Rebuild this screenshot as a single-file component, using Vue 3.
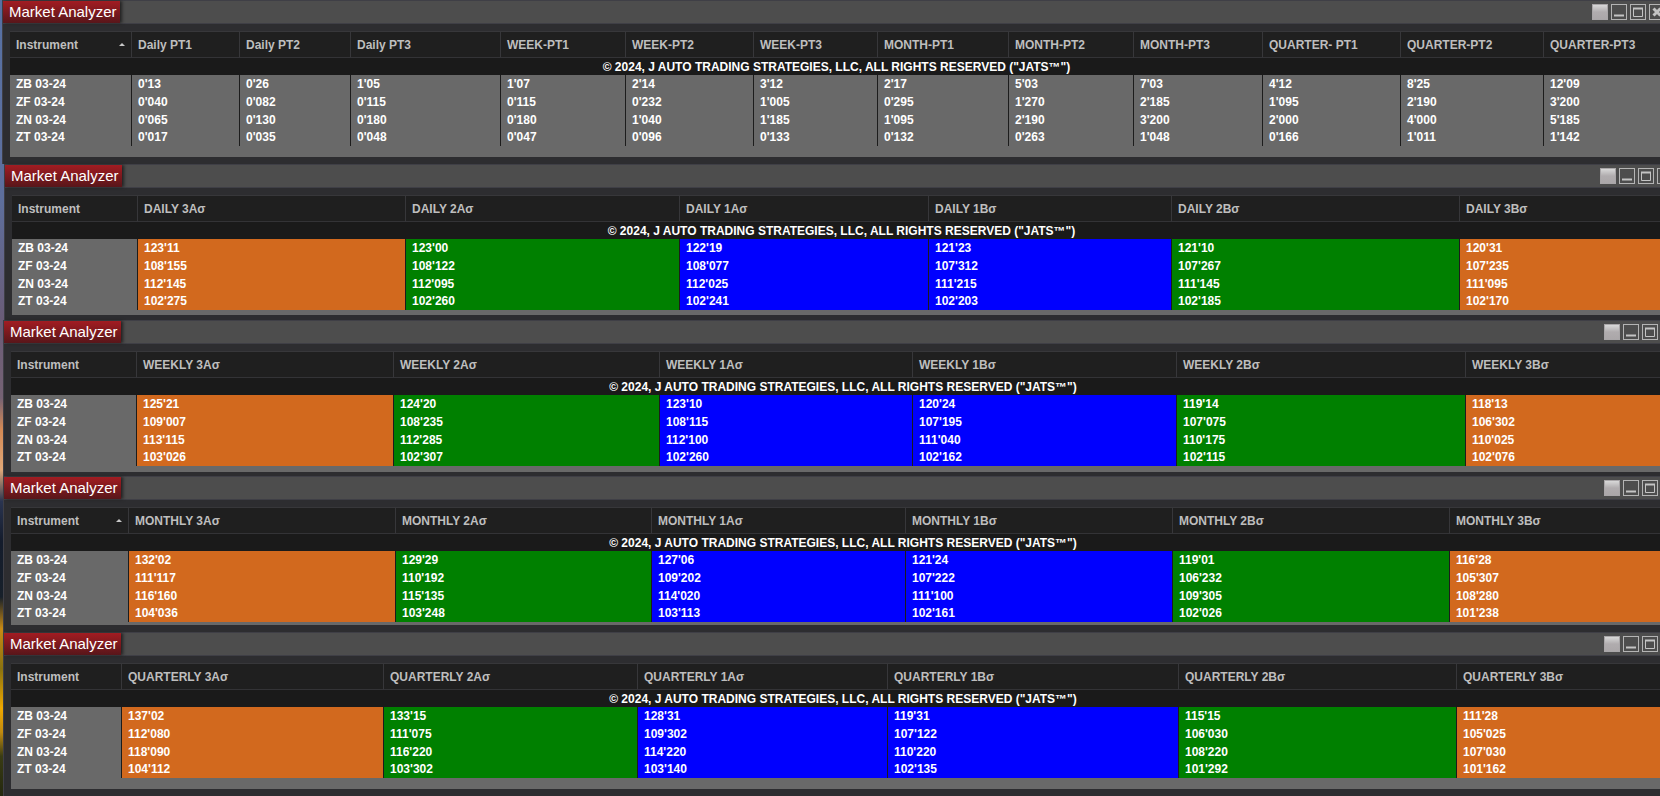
<script setup>
const notice = '© 2024, J AUTO TRADING STRATEGIES, LLC, ALL RIGHTS RESERVED ("JATS™")'
const symbols = ['ZB 03-24', 'ZF 03-24', 'ZN 03-24', 'ZT 03-24']
const bands = ['orange', 'green', 'blue', 'blue', 'green', 'orange']
const bandNames = ['3Aσ', '2Aσ', '1Aσ', '1Bσ', '2Bσ', '3Bσ']

const rows = (text) => text.trim().split('\n').map((line) => line.trim().split(/\s+/))

const panels = [
  {
    id: 'targets',
    sorted: true,
    weights: [122, 108, 111, 150, 125, 128, 124, 131, 125, 129, 138, 143, 119],
    heads: ['Daily PT1', 'Daily PT2', 'Daily PT3', 'WEEK-PT1', 'WEEK-PT2', 'WEEK-PT3', 'MONTH-PT1',
      'MONTH-PT2', 'MONTH-PT3', 'QUARTER- PT1', 'QUARTER-PT2', 'QUARTER-PT3'],
    tones: Array(12).fill('plain'),
    rows: rows(`
      0'13 0'26 1'05 1'07 2'14 3'12 2'17 5'03 7'03 4'12 8'25 12'09
      0'040 0'082 0'115 0'115 0'232 1'005 0'295 1'270 2'185 1'095 2'190 3'200
      0'065 0'130 0'180 0'180 1'040 1'185 1'095 2'190 3'200 2'000 4'000 5'185
      0'017 0'035 0'048 0'047 0'096 0'133 0'132 0'263 1'048 0'166 1'011 1'142`),
  },
  {
    id: 'daily',
    sorted: false,
    weights: [126, 268, 274, 249, 243, 288, 211],
    heads: bandNames.map((n) => 'DAILY ' + n),
    tones: bands,
    rows: rows(`
      123'11 123'00 122'19 121'23 121'10 120'31
      108'155 108'122 108'077 107'312 107'267 107'235
      112'145 112'095 112'025 111'215 111'145 111'095
      102'275 102'260 102'241 102'203 102'185 102'170`),
  },
  {
    id: 'weekly',
    sorted: false,
    weights: [126, 257, 266, 253, 264, 289, 209],
    heads: bandNames.map((n) => 'WEEKLY ' + n),
    tones: bands,
    rows: rows(`
      125'21 124'20 123'10 120'24 119'14 118'13
      109'007 108'235 108'115 107'195 107'075 106'302
      113'115 112'285 112'100 111'040 110'175 110'025
      103'026 102'307 102'260 102'162 102'115 102'076`),
  },
  {
    id: 'monthly',
    sorted: true,
    weights: [118, 267, 256, 254, 267, 277, 225],
    heads: bandNames.map((n) => 'MONTHLY ' + n),
    tones: bands,
    rows: rows(`
      132'02 129'29 127'06 121'24 119'01 116'28
      111'117 110'192 109'202 107'222 106'232 105'307
      116'160 115'135 114'020 111'100 109'305 108'280
      104'036 103'248 103'113 102'161 102'026 101'238`),
  },
  {
    id: 'quarterly',
    sorted: false,
    weights: [111, 262, 254, 250, 291, 278, 218],
    heads: bandNames.map((n) => 'QUARTERLY ' + n),
    tones: bands,
    rows: rows(`
      137'02 133'15 128'31 119'31 115'15 111'28
      112'080 111'075 109'302 107'122 106'030 105'025
      118'090 116'220 114'220 110'220 108'220 107'030
      104'112 103'302 103'140 102'135 101'292 101'162`),
  },
]

const share = (panel, w) => (100 * w) / panel.weights.reduce((a, b) => a + b, 0) + '%'
</script>

<template>
  <main class="desktop">
    <section v-for="panel in panels" :key="panel.id" class="panel" :class="panel.id">
      <header class="titlebar">
        <h2 class="tab">Market Analyzer</h2>
        <div class="controls">
          <button type="button" class="ctl link" aria-label="Link"></button>
          <button type="button" class="ctl" aria-label="Minimize">
            <svg viewBox="0 0 14 14"><path d="M2 10.5h10" /></svg>
          </button>
          <button type="button" class="ctl" aria-label="Maximize">
            <svg viewBox="0 0 14 14"><path d="M2.5 3.5h9v8h-9z" stroke-width="1" /><path d="M2 3.5h10" /></svg>
          </button>
          <button type="button" class="ctl" aria-label="Close">
            <svg viewBox="0 0 14 14"><path d="M3.5 3.5l7 7M10.5 3.5l-7 7" stroke-width="3" /></svg>
          </button>
        </div>
      </header>
      <div class="sheet">
        <table>
          <colgroup>
            <col v-for="(w, i) in panel.weights" :key="i" :style="{ width: share(panel, w) }" />
          </colgroup>
          <thead>
            <tr class="heads">
              <th scope="col" :aria-sort="panel.sorted ? 'ascending' : 'none'">
                <span class="head">
                  Instrument
                  <svg v-if="panel.sorted" class="arrow" viewBox="0 0 6 3"><path d="M0 3L3 0L6 3z" /></svg>
                </span>
              </th>
              <th v-for="h in panel.heads" :key="h" scope="col">{{ h }}</th>
            </tr>
            <tr class="notice">
              <td :colspan="panel.weights.length">{{ notice }}</td>
            </tr>
          </thead>
          <tbody>
            <tr v-for="(row, r) in panel.rows" :key="r">
              <th scope="row">{{ symbols[r] }}</th>
              <td v-for="(v, c) in row" :key="c" :class="panel.tones[c]">{{ v }}</td>
            </tr>
          </tbody>
        </table>
      </div>
    </section>
  </main>
</template>

<style>
body {
  margin: 0;
  background: #2d2d30;
}
</style>

<style scoped>
.desktop {
  overflow: hidden;
  font-family: "Liberation Sans", Arial, sans-serif;
  background: linear-gradient(#5670a4 0%, #5e6f9d 25%, #6a5c78 40%, #756274 50%, #d58a55 54%, #e0a878 59%,
    #2a3450 63%, #141c2c 68%, #17202a 75%, #c88a14 79%, #8a7210 84%, #f0a800 89%, #c08a10 92%, #3a3c14 95%, #24280f 100%);
}
.panel {
  box-sizing: border-box;
  border-left: 1px solid #3f3f46;
  background: #2d2d30;
}
/* Windows run past the right edge of the desktop. */
.targets {
  margin: 0 -10px 0 2px;
  padding-bottom: 7px;
}
.daily {
  margin: 0 -18px 0 4px;
  padding-bottom: 5px;
}
.weekly,
.monthly,
.quarterly {
  margin: 0 -22px 0 3px;
  padding-bottom: 4px;
}
.monthly,
.quarterly {
  padding-bottom: 7px;
}
.titlebar {
  display: flex;
  justify-content: space-between;
  align-items: stretch;
  height: 22px;
  border-top: 1px solid #3f3f46;
  border-bottom: 1px solid #3f3f46;
  background: #4d4d4d;
}
.tab {
  margin: 0;
  padding: 0 3px 0 6px;
  font-size: 15px;
  font-weight: 400;
  line-height: 22px;
  white-space: nowrap;
  color: #fff;
  background: linear-gradient(#a21c22, #58161a);
  box-shadow: 2px 0 3px #222;
}
.controls {
  display: flex;
  align-items: center;
  gap: 3px;
  padding-right: 5px;
}
.ctl {
  box-sizing: border-box;
  width: 16px;
  height: 16px;
  padding: 0;
  border: 1px solid #b4b4b4;
  background: transparent;
  display: flex;
}
.ctl.link {
  border-color: #a9a6a8;
  background: linear-gradient(#d8d8d8, #b0acae 50%, #aba7a9);
}
.ctl svg {
  width: 14px;
  height: 14px;
  fill: none;
  stroke: #c4c4c4;
  stroke-width: 2;
}
.sheet {
  margin: 7px 7px 0;
  padding-bottom: 11px;
  background: #696969;
}
.daily .sheet {
  padding-bottom: 5px;
}
.weekly .sheet {
  padding-bottom: 6px;
}
.monthly .sheet {
  padding-bottom: 3px;
}
table {
  width: 100%;
  table-layout: fixed;
  border-collapse: separate;
  border-spacing: 0;
  font-size: 12px;
  font-weight: 700;
  color: #fff;
}
th,
td {
  box-sizing: border-box;
  padding: 0 6px;
  text-align: left;
  line-height: 16px;
  white-space: nowrap;
}
.heads th {
  height: 27px;
  border-top: 1px solid #37373a;
  border-bottom: 1px solid #333336;
  border-right: 1px solid #37373a;
  color: #bebebe;
  background: #1f1f1f;
}
.head {
  display: flex;
  align-items: center;
  justify-content: space-between;
}
.arrow {
  width: 6px;
  height: 3px;
  fill: #c8c8c8;
}
.notice td {
  height: 17px;
  text-align: center;
  background: #1a1a1a;
}
tbody th,
tbody td {
  height: 18px;
  border-right: 1px solid #1c1c1c;
}
tbody tr:nth-child(3) > * {
  height: 17px;
}
.orange {
  background: #d2691e;
}
.green {
  background: #008000;
}
.blue {
  background: #0000ff;
}
</style>
